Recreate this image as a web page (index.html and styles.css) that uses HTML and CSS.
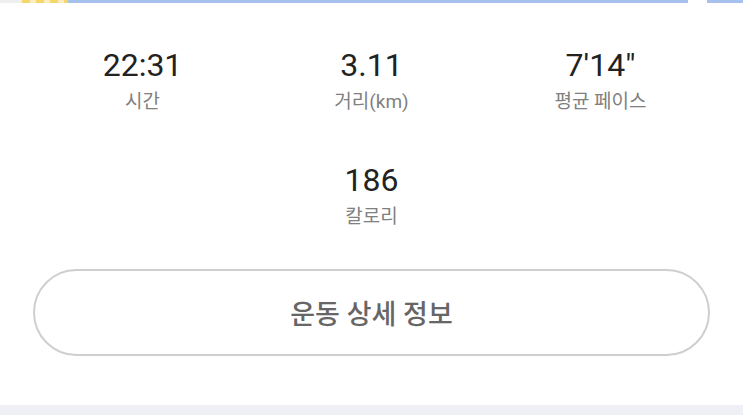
FILE: index.html
```html
<!DOCTYPE html>
<html lang="ko">
  <head>
    <meta charset="UTF-8" />
    <meta name="viewport" content="width=device-width, initial-scale=1.0" />
    <title>운동 기록</title>
    <link rel="stylesheet" href="styles.css">
  </head>
  <body>
    <div class="top-strip">
      <div class="strip-map"></div>
      <div class="strip-stripes"></div>
      <div class="strip-blue"></div>
      <div class="strip-gap"></div>
      <div class="strip-blue strip-short"></div>
    </div>

    <div class="summary">
      <div class="stat">
        <div class="stat-value">22:31</div>
        <div class="stat-label">시간</div>
      </div>
      <div class="stat">
        <div class="stat-value">3.11</div>
        <div class="stat-label">거리(km)</div>
      </div>
      <div class="stat">
        <div class="stat-value">7'14"</div>
        <div class="stat-label">평균 페이스</div>
      </div>
      <div class="stat stat-middle">
        <div class="stat-value">186</div>
        <div class="stat-label">칼로리</div>
      </div>
    </div>

    <div class="detail-wrap">
      <button class="detail-button">운동 상세 정보</button>
    </div>

    <div class="footer-band"></div>
  </body>
</html>
```

FILE: styles.css
```css
body {
  margin: 0;
  background: #fff;
  font-family: Roboto, "Noto Sans CJK KR", sans-serif;
  overflow: hidden;
}

.top-strip {
  display: flex;
  height: 3px;
}

.strip-map {
  width: 22px;
  background: #eef0f0;
}

.strip-stripes {
  width: 46px;
  background: repeating-linear-gradient(90deg, #f5d66a 0 8px, #fbeebc 8px 14px);
}

.strip-blue {
  flex: 1;
  background: #a6c1ee;
}

.strip-gap {
  width: 19px;
}

.strip-short {
  flex: 0 0 36px;
}

.summary {
  display: grid;
  grid-template-columns: 1fr 1fr 1fr;
  row-gap: 41px;
  padding: 43px 28px 0;
}

.stat {
  text-align: center;
}

.stat-middle {
  grid-column: 2;
}

.stat-value {
  font-size: 32px;
  line-height: 38px;
  color: #222;
}

.stat-label {
  font-size: 19px;
  line-height: 36px;
  color: #808080;
}

.detail-wrap {
  padding: 34px 33px 0;
}

.detail-button {
  display: block;
  width: 100%;
  height: 87px;
  border: solid 2px #cfcfcf;
  border-radius: 44px;
  background: #fff;
  font-family: Roboto, "Noto Sans CJK KR", sans-serif;
  font-size: 27px;
  font-weight: 500;
  color: #666;
}

.footer-band {
  margin-top: 49px;
  height: 10px;
  background: #eef0f6;
}
```
